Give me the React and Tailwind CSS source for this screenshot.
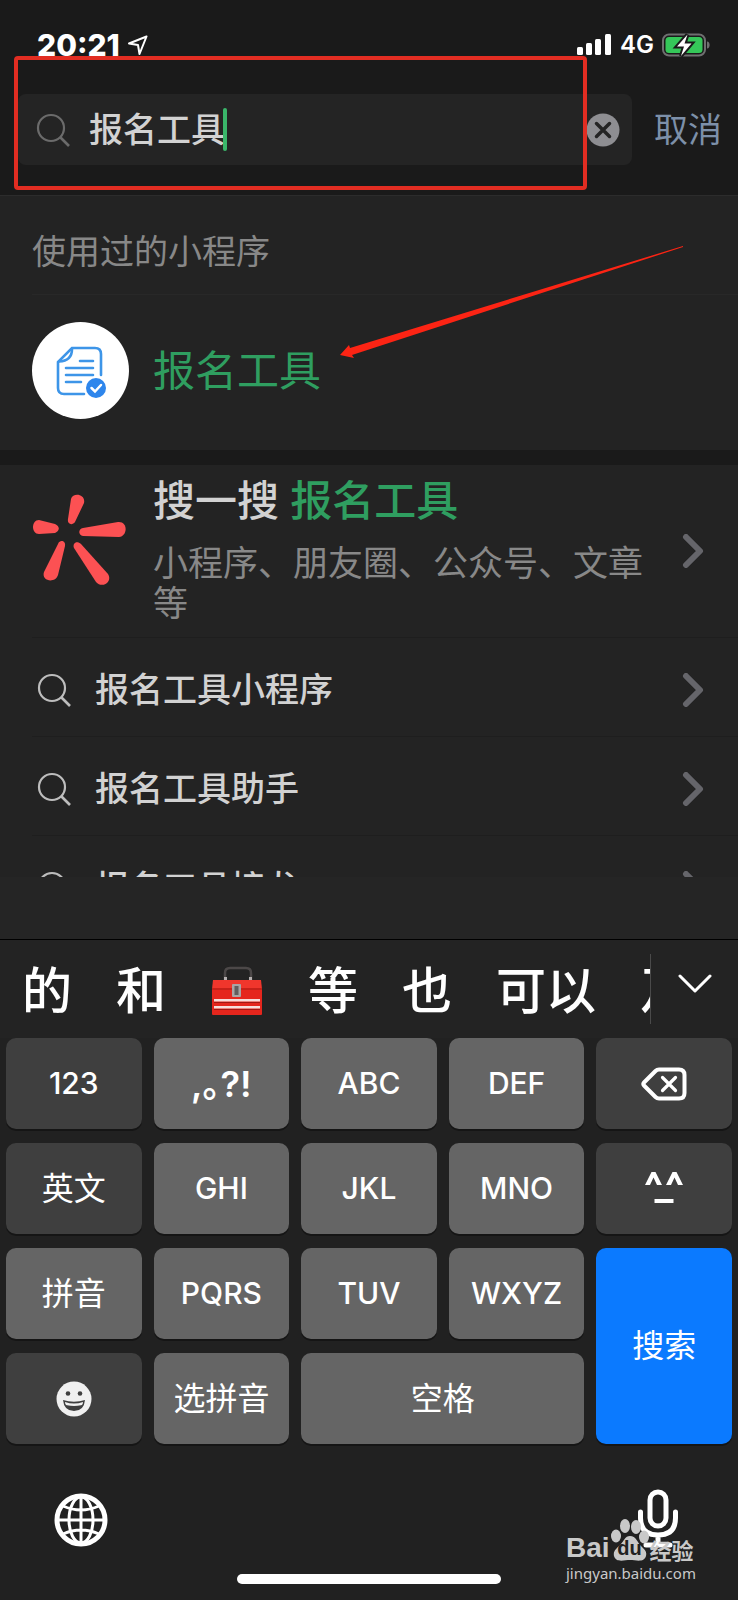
import React, { useState } from 'react';
import { clsx } from 'clsx';

const suggestions = ['报名工具小程序', '报名工具助手'];

const SearchIcon = ({ className }) => (
  <svg viewBox="0 0 34 34" fill="none" stroke="currentColor" strokeWidth="2.2" className={clsx('w-[34px] h-[34px] shrink-0', className)}>
    <circle cx="15" cy="15" r="13" />
    <path d="M24 24l9 9" strokeWidth="2.6" />
  </svg>
);

const ChevronRight = () => (
  <svg viewBox="0 0 22 34" fill="none" stroke="#65656a" strokeWidth="6" strokeLinecap="round" strokeLinejoin="round" className="w-[22px] h-[34px] shrink-0">
    <path d="M4 3l14 14L4 31" />
  </svg>
);

const StatusBar = () => (
  <div className="flex items-center justify-between h-[94px] pl-[37px] pr-[27px] pb-1 text-white">
    <div className="flex items-center gap-2">
      <span className="text-[30px] leading-none font-extrabold">20:21</span>
      <svg viewBox="0 0 20 20" fill="none" stroke="white" strokeWidth="2" strokeLinejoin="round" className="w-5 h-5">
        <path d="M18.5 1.5L1 8.5l9 1.5 1.5 9z" />
      </svg>
    </div>
    <div className="flex items-center gap-2">
      <svg viewBox="0 0 35 22" fill="white" className="w-[35px] h-[22px]">
        <rect x="0" y="13" width="6" height="8" rx="1.5" />
        <rect x="9" y="9" width="6" height="12" rx="1.5" />
        <rect x="18" y="5" width="6" height="16" rx="1.5" />
        <rect x="28" y="0" width="6" height="21" rx="1.5" />
      </svg>
      <span className="text-2xl leading-none font-semibold">4G</span>
      <svg viewBox="0 0 49 24" className="w-[49px] h-6">
        <rect x="1" y="1.5" width="42" height="21" rx="6" fill="none" stroke="#6f6f70" strokeWidth="2" />
        <path d="M45 8.5c3.5 0 3.5 7 0 7z" fill="#6f6f70" />
        <rect x="3.5" y="4" width="37" height="16" rx="3.5" fill="#35c759" />
        <path d="M25.5 1.5L15 13.5h7L19 23 29.500 10.500h-7z" fill="white" stroke="#1a1a1a" strokeWidth="4" paintOrder="stroke" />
      </svg>
    </div>
  </div>
);

const ToolboxIcon = () => (
  <svg viewBox="0 0 54 50" className="w-[54px] h-[50px] shrink-0">
    <path d="M15 14V7q0-5 5-5h16q5 0 5 5v7" fill="none" stroke="#4c4848" strokeWidth="2.5" />
    <path d="M14 11h3v4h-3zM39 11h3v4h-3z" fill="#b5b0b0" />
    <path d="M3 14h48l1 9H2z" fill="#f0362c" />
    <rect x="2" y="22" width="50" height="27" rx="1" fill="#e5261d" />
    <path d="M2 23h50" stroke="#a81c17" strokeWidth="1" />
    <rect x="4" y="33" width="46" height="2.5" fill="#f6dedc" />
    <rect x="4" y="40" width="46" height="2.5" fill="#f6dedc" />
    <path d="M4 36.500h46M4 43.500h46" stroke="#a31812" strokeWidth="1" />
    <rect x="22" y="18" width="9" height="13" rx="1" fill="#a9a3a3" />
    <rect x="24.5" y="20" width="4" height="9" fill="#615c5c" />
  </svg>
);

const BackspaceIcon = () => (
  <svg viewBox="0 0 46 34" fill="none" stroke="white" strokeWidth="4" strokeLinecap="round" strokeLinejoin="round" className="w-[46px] h-[34px]">
    <path d="M18 2.500h20q5.500 0 5.500 5.500v18q0 5.500-5.500 5.500H18q-2 0-3.500-1.500L3 18.500q-1.500-1.500 0-3L14.500 4Q16 2.500 18 2.500z" />
    <path d="M21.500 10.500l13 13M34.500 10.500l-13 13" strokeWidth="3.2" />
  </svg>
);

const KaomojiIcon = () => (
  <svg viewBox="0 0 40 34" fill="white" className="w-10 h-[34px]">
    <path d="M1 13L7.500 0h4L18 13h-5l-3.500-7.500-3.500 7.500zM22 13L28.500 0h4L39 13h-5l-3.500-7.500-3.500 7.500z" />
    <path d="M10.500 27h19v4h-19z" />
  </svg>
);

const SmileIcon = () => (
  <svg viewBox="0 0 36 36" className="w-9 h-9">
    <circle cx="18" cy="18" r="17.5" fill="#f0f0f0" />
    <circle cx="12" cy="12.5" r="2.3" fill="#3f3f3f" />
    <circle cx="24" cy="12.5" r="2.3" fill="#3f3f3f" />
    <path d="M7 19q11 3.500 22 0-1 11-11 11T7 19z" fill="#3f3f3f" />
    <path d="M9 21q9 3 18 0 0 3-2 3.200-7 1.500-14 0Q9 24 9 21z" fill="#f0f0f0" />
  </svg>
);

const keys = [
  { label: '123', dark: true },
  { label: ',。?!', punct: true },
  { label: 'ABC' },
  { label: 'DEF' },
  { icon: <BackspaceIcon />, name: '删除', dark: true },
  { label: '英文', dark: true, cjk: true },
  { label: 'GHI' },
  { label: 'JKL' },
  { label: 'MNO' },
  { icon: <KaomojiIcon />, name: '颜文字', dark: true },
  { label: '拼音', cjk: true },
  { label: 'PQRS' },
  { label: 'TUV' },
  { label: 'WXYZ' },
  { label: '搜索', cjk: true, primary: true },
  { icon: <SmileIcon />, name: '表情', dark: true },
  { label: '选拼音', cjk: true },
  { label: '空格', cjk: true, wide: true },
];

const Key = ({ item }) => (
  <button
    type="button"
    aria-label={item.name}
    className={clsx(
      'flex items-center justify-center rounded-[10px] text-white shadow-[0_2px_0_#151515]',
      item.punct && "text-[36px] font-semibold [font-feature-settings:'halt']",
      item.cjk && 'text-[32px]',
      !item.cjk && !item.punct && 'text-[30px] font-medium',
      item.primary ? 'row-span-2 bg-[#0b7aff]' : item.dark ? 'bg-[#3f3f3f]' : 'bg-[#656565]',
      item.wide && 'col-span-2'
    )}
  >
    {item.icon || item.label}
  </button>
);

const Keyboard = () => (
  <section className="grow bg-[#212121] border-t border-black">
    {/* Candidates */}
    <div className="flex items-center h-[98px] bg-[#232323] text-white">
      <div className="flex flex-1 min-w-0 items-center gap-11 h-[70px] pl-[22px] pt-1 overflow-hidden border-r border-[#4a4a4a] text-[50px] leading-none font-medium whitespace-nowrap">
        <button type="button">的</button>
        <button type="button">和</button>
        <button type="button" aria-label="工具箱"><ToolboxIcon /></button>
        <button type="button">等</button>
        <button type="button">也</button>
        <button type="button">可以</button>
        <button type="button">及</button>
      </div>
      <button type="button" aria-label="展开" className="flex justify-center w-[87px] pb-2.5">
        <svg viewBox="0 0 34 20" fill="none" stroke="white" strokeWidth="3" strokeLinecap="round" strokeLinejoin="round" className="w-[34px] h-5">
          <path d="M2 2l15 15L32 2" />
        </svg>
      </button>
    </div>

    <div className="grid grid-cols-5 auto-rows-[91px] gap-x-3 gap-y-3.5 px-1.5">
      {keys.map((item) => (
        <Key key={item.label || item.name} item={item} />
      ))}
    </div>

    <div className="flex items-start justify-between pt-[45px] pl-[54px] pr-[59px]">
      <button type="button" aria-label="切换键盘" className="pt-1">
        <svg viewBox="0 0 54 54" fill="none" stroke="white" strokeWidth="3" className="w-[54px] h-[54px]">
          <circle cx="27" cy="27" r="24" strokeWidth="5" />
          <ellipse cx="27" cy="27" rx="12" ry="23" />
          <path d="M27 3v48M3 27h48M9 13q18 8 36 0M9 41q18-8 36 0" />
        </svg>
      </button>
      <button type="button" aria-label="语音输入">
        <svg viewBox="0 0 42 60" fill="none" stroke="white" strokeWidth="5" strokeLinecap="round" className="w-[42px] h-[60px]">
          <rect x="13" y="3" width="16" height="34" rx="8" />
          <path d="M3.500 23v6q0 17 17.500 17t17.500-17v-6M21 46v9M9 56h24" />
        </svg>
      </button>
    </div>
    <div className="w-[264px] h-2.5 mt-[25px] mb-4 mx-auto rounded-full bg-white" />
  </section>
);

const Watermark = () => (
  <div className="absolute right-10 bottom-4 w-[132px] text-[#c9c9c9] pointer-events-none">
    <div className="flex items-end h-[46px] leading-none font-bold">
      <span className="font-['Liberation_Sans',sans-serif] text-[28px]">Bai</span>
      <span className="relative">
        <svg viewBox="0 0 40 44" fill="#c9c9c9" className="w-10 h-11">
          <ellipse cx="6" cy="18" rx="5" ry="6.5" />
          <ellipse cx="15" cy="8" rx="5" ry="7" />
          <ellipse cx="26" cy="9" rx="5" ry="7" />
          <ellipse cx="34" cy="19" rx="5" ry="6.5" />
          <path d="M20 18c6 0 7 6 11 10s6 5 5 10c-2 7-10 4-16 4S6 45 4 38c-1-5 2-7 6-11s5-9 10-9z" />
        </svg>
        <span className="absolute inset-x-0 bottom-1 text-center font-['Liberation_Sans',sans-serif] text-xl leading-none text-[#212121]">du</span>
      </span>
      <span className="text-[22px]">经验</span>
    </div>
    <div className="font-['Noto_Sans',sans-serif] text-[15px] leading-[22px] whitespace-nowrap">jingyan.baidu.com</div>
  </div>
);

const App = () => {
  const [query, setQuery] = useState('报名工具');

  return (
    <div className="relative flex flex-col min-h-screen overflow-hidden bg-[#232323] font-['Inter','Noto_Sans_CJK_SC',sans-serif]">
      <header className="bg-[#1a1a1a] border-b border-[#2c2c2c]">
        <StatusBar />
        <div className="flex items-center pl-[18px] pr-4 pb-[30px]">
          <div className="flex flex-1 min-w-0 items-center h-[71px] pl-[18px] pr-3 rounded-lg bg-[#242424]">
            <SearchIcon className="text-[#6b6b6b]" />
            <div className="flex flex-1 min-w-0 items-center pl-[19px]">
              <input
                type="text"
                aria-label="搜索"
                value={query}
                onChange={(e) => setQuery(e.target.value)}
                className="field-sizing-content min-w-0 bg-transparent outline-none text-[34px] leading-[44px] font-medium text-[#d2d2d2]"
              />
              <span className="w-1 h-[43px] -ml-0.5 rounded-full bg-[#3ab66a]" />
            </div>
            <button type="button" aria-label="清除" onClick={() => setQuery('')}>
              <svg viewBox="0 0 34 34" className="w-[34px] h-[34px]">
                <circle cx="17" cy="17" r="16.5" fill="#8e8e92" />
                <path d="M10.500 10.500l13 13M23.500 10.500l-13 13" stroke="#242424" strokeWidth="3.5" strokeLinecap="round" />
              </svg>
            </button>
          </div>
          <button type="button" className="pl-[22px] text-[34px] leading-[44px] text-[#7d90a9]">取消</button>
        </div>
      </header>

      <main>
        <h2 className="pl-8 pt-[34px] pb-5 text-[34px] leading-[44px] text-[#888888]">使用过的小程序</h2>
        <a href="#mini" className="flex items-center gap-6 ml-8 h-[156px] pb-1 border-t border-[#282828]">
          <svg viewBox="0 0 97 97" fill="none" stroke="#3d95e8" strokeWidth="2.6" strokeLinecap="round" className="w-[97px] h-[97px] shrink-0">
            <circle cx="48.5" cy="48.5" r="48.5" fill="white" stroke="none" />
            <path d="M69 53V32q0-6-6-6H40L26 40v26q0 6 6 6h20" />
            <path d="M40 27q0 12-13 12.500" />
            <path d="M48 39h13M34 46h27M34 53h27M34 60h15" />
            <circle cx="64" cy="66" r="10" fill="#2e86ec" stroke="none" />
            <path d="M59.500 66l3.500 3.500 6-6.500" stroke="white" strokeWidth="2.5" />
          </svg>
          <span className="text-[42px] leading-[56px] text-[#2f9e60]">报名工具</span>
        </a>

        <div className="h-[15px] bg-[#1a1a1a]" />

        <a href="#search" className="flex items-center pl-8 pr-[34px]">
          <svg viewBox="0 0 97 97" fill="#fc5153" className="w-[97px] h-[97px] mr-6 shrink-0 -mt-5">
            <path d="M39 6c2-7 15-5 13 4L43 29c-3 4-8 2-7-3z" />
            <path d="M7 27l16 4c5 2 5 7 0 9L7 41c-8 0-8-14 0-14z" />
            <path d="M51 35l35-6c10-1 10 14 1 15l-36-1c-5-1-5-7 0-8z" />
            <path d="M26 51c2-5 8-3 7 2l-7 29c-3 9-17 6-14-3z" />
            <path d="M42 55c-2-5 3-8 7-4l27 30c5 8-6 15-12 8z" />
          </svg>
          <div className="flex-1 min-w-0 pt-2 pb-3.5">
            <p className="text-[42px] leading-[56px] font-medium text-[#d2d2d2]">
              搜一搜 <span className="text-[#2f9e60]">报名工具</span>
            </p>
            <p className="pt-3.5 pr-6 text-[35px] leading-10 text-[#888888]">小程序、朋友圈、公众号、文章等</p>
          </div>
          <ChevronRight />
        </a>

        <ul>
          {suggestions.map((text) => (
            <li key={text} className="ml-8 border-t border-[#1e1e1e]">
              <a href="#suggestion" className="flex items-center h-[98px] pl-[5px] pr-[34px] pt-1.5">
                <SearchIcon className="text-[#bdbdbd]" />
                <span className="flex-1 pl-6 text-[34px] leading-[44px] font-medium text-[#d2d2d2]">{text}</span>
                <ChevronRight />
              </a>
            </li>
          ))}
          {/* Partly hidden behind the keyboard */}
          <li className="ml-8 h-[42px] overflow-hidden border-t border-[#1e1e1e]">
            <a href="#suggestion" className="flex items-center h-[98px] pl-[5px] pr-[34px] pt-1.5">
              <SearchIcon className="text-[#bdbdbd]" />
              <span className="flex-1 pl-6 text-[34px] leading-[44px] font-medium text-[#d2d2d2]">报名工具接龙</span>
              <ChevronRight />
            </a>
          </li>
        </ul>
      </main>

      <div className="h-[62px] bg-[#252525]" />
      <Keyboard />
      <Watermark />

      {/* Annotations */}
      <div className="absolute left-3.5 right-[151px] top-14 h-[134px] border-4 border-[#e22d22] rounded-sm pointer-events-none" />
      <svg viewBox="0 0 344 112" className="absolute left-[340px] top-[246px] w-[344px] h-28 pointer-events-none">
        <path d="M0 109l9-10 1 3L343 0v1L12 109l2 3z" fill="#fc2414" />
      </svg>
    </div>
  );
};

export default App;
